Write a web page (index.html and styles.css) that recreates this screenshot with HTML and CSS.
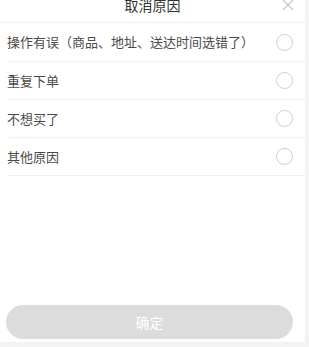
FILE: index.html
```html
<!DOCTYPE html>
<html lang="zh">
<head>
<meta charset="utf-8">
<link rel="stylesheet" href="styles.css">
</head>
<body>
<div class="panel">
  <div class="header">
    <span class="title">取消原因</span>
    <svg class="close" width="12" height="12" viewBox="0 0 12 12"><path d="M1 1L11 11M11 1L1 11" stroke="#c4c4c4" stroke-width="1.1" fill="none"/></svg>
  </div>
  <ul class="list">
    <li class="row"><span>操作有误（商品、地址、送达时间选错了）</span><i class="radio"></i></li>
    <li class="row"><span>重复下单</span><i class="radio"></i></li>
    <li class="row"><span>不想买了</span><i class="radio"></i></li>
    <li class="row"><span>其他原因</span><i class="radio"></i></li>
  </ul>
  <div class="spacer"></div>
  <button class="confirm">确定</button>
</div>
</body>
</html>
```

FILE: styles.css
```css
html, body {
  margin: 0;
  padding: 0;
  background: #f3f3f3;
}
body {
  width: 309px;
  height: 347px;
  overflow: hidden;
  font-family: "Noto Sans CJK SC", "Noto Sans", sans-serif;
}
.panel {
  width: 305px;
  height: 342px;
  background: #fff;
  display: flex;
  flex-direction: column;
}
.header {
  height: 22px;
  border-bottom: 1px solid #efefef;
  position: relative;
  display: flex;
  justify-content: center;
}
.title {
  font-size: 14px;
  line-height: 11px;
  color: #333;
}
.close {
  position: absolute;
  right: 11px;
  top: -1px;
}
.list {
  list-style: none;
  margin: 0;
  padding: 0;
}
.row {
  height: 37px;
  margin-left: 7px;
  padding-right: 12px;
  border-bottom: 1px solid #f0f0f0;
  display: flex;
  align-items: center;
  justify-content: space-between;
  font-size: 13px;
  color: #4a4a4a;
}
.row:first-child {
  height: 38px;
}
.row span {
  line-height: 16px;
}
.radio {
  width: 15px;
  height: 15px;
  border: 1px solid #cfcfcf;
  border-radius: 50%;
  box-sizing: content-box;
}
.spacer {
  flex: 1;
}
.confirm {
  margin: 0 12px 3px 6px;
  height: 34px;
  border: none;
  border-radius: 17px;
  background: #dcdcdc;
  color: #fff;
  font-family: "Noto Sans CJK SC", "Noto Sans", sans-serif;
  font-size: 14px;
  padding: 0;
}
```
